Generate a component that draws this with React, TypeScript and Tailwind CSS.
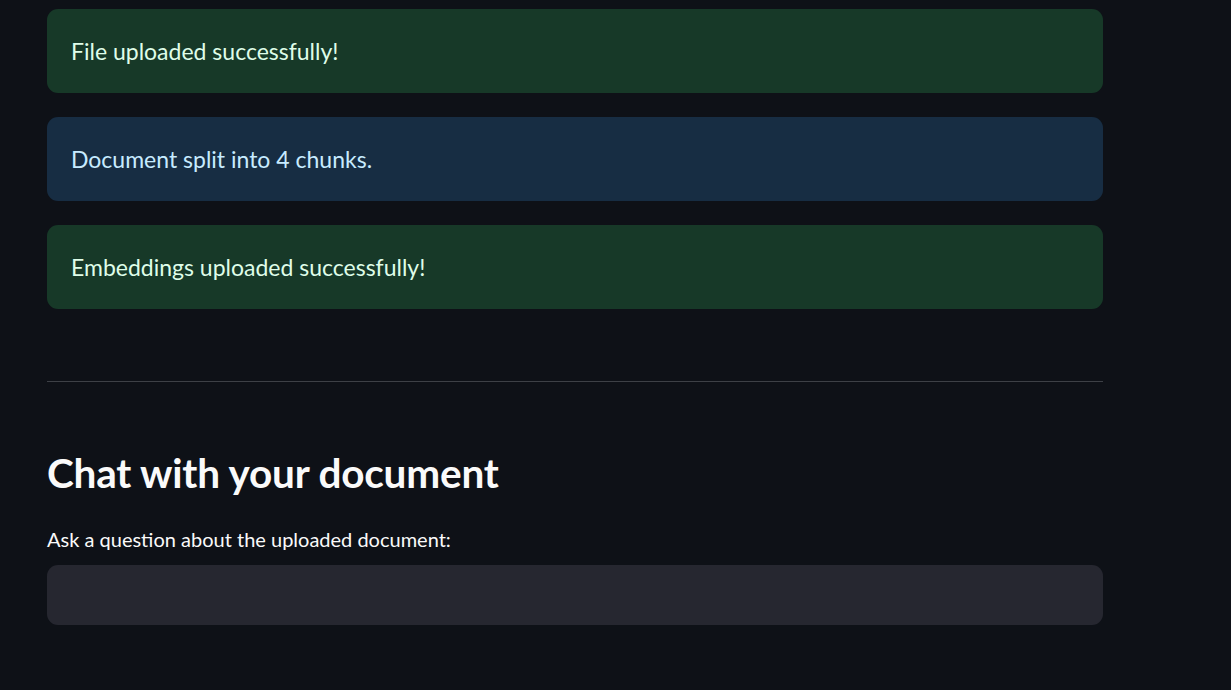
import React from 'react';

type Kind = 'success' | 'info';

function Alert({ kind, children }: { kind: Kind; children: React.ReactNode }) {
  const tone =
    kind === 'success'
      ? 'bg-[#173928] text-[#dffde9]'
      : 'bg-[#172d43] text-[#c7ebff]';
  return (
    <div className={`flex h-[84px] items-center rounded-[11px] px-6 ${tone}`}>
      <p className="text-[23px] leading-none">{children}</p>
    </div>
  );
}

export default function App() {
  return (
    <div
      className="min-h-[690px] bg-[#0e1117] text-[#fafafa]"
      style={{ fontFamily: 'Lato, "Noto Sans", sans-serif' }}
    >
      <div className="w-[1056px] ml-[47px] pt-[9px]">
        {/* Status messages */}
        <div className="flex flex-col gap-6">
          <Alert kind="success">File uploaded successfully!</Alert>
          <Alert kind="info">Document split into 4 chunks.</Alert>
          <Alert kind="success">Embeddings uploaded successfully!</Alert>
        </div>

        <hr className="mt-[72px] border-0 border-t border-[#3d4046]" />

        {/* Chat section */}
        <h2 className="mt-[67px] text-[40.5px] font-bold leading-[1.2] tracking-[-0.2px]">
          Chat with your document
        </h2>
        <label className="mt-[28px] block text-[20px] leading-[1.3]">
          Ask a question about the uploaded document:
        </label>
        <div className="mt-[13px] h-[60px] rounded-[11px] bg-[#262730]" />
      </div>
    </div>
  );
}
